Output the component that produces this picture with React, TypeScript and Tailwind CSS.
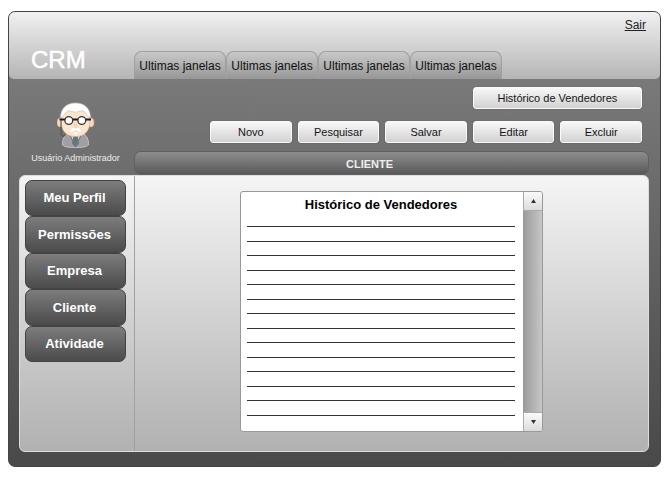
const tabs = ["Ultimas janelas", "Ultimas janelas", "Ultimas janelas", "Ultimas janelas"];
const actions = ["Novo", "Pesquisar", "Salvar", "Editar", "Excluir"];
const menu = ["Meu Perfil", "Permissões", "Empresa", "Cliente", "Atividade"];
const lines = Array.from({ length: 14 }, (_, i) => i);

const actionClass =
  "h-[22px] rounded-[3px] border border-[#fafafa] bg-linear-to-b from-[#f8f8f8] to-[#d2d2d2] text-[11px] leading-4 text-[#151515] shadow-[0_0_1px_#444]";

function Avatar() {
  return (
    <svg width="38" height="46" viewBox="0 0 38 46" role="img" aria-label="Usuário Administrador">
      <path d="M5.500 43C5 36 9 31 15 30h7c6 1 10 6 9.500 13-2 2-7 2.500-13 2.500S7 45 5.500 43z" fill="#a0a0a3" stroke="#c2c2c5" strokeWidth="1" />
      <path d="M13 31l5.500 13L24 31l-5.500 3z" fill="#d5d9de" />
      <path d="M16.500 33.500h4l1.500 8-3.500 4-3.500-4z" fill="#617684" />
      <path d="M12 32l6.500 12M25 32l-6.500 12" stroke="#77777c" fill="none" />
      <ellipse cx="3" cy="20.500" rx="3" ry="4.500" fill="#f8d9ba" stroke="#c99a74" strokeWidth=".6" />
      <ellipse cx="34" cy="20.500" rx="3" ry="4.500" fill="#f8d9ba" stroke="#c99a74" strokeWidth=".6" />
      <path d="M4.500 13C6 6 12 4 18.500 4S31 6 32.500 13v10c-1 7-6 11.500-14 11.500S5.500 30 4.500 23z" fill="#fde5cb" stroke="#dcb28f" strokeWidth=".6" />
      <path d="M3.500 16C3.500 6 10 1 18.500 1s15 5 15 15l-3-2.500C28.500 12 28 9.500 26 9c-3-.7-5 1.300-7.500 1.300S14 8.300 11 9c-2 .5-2.500 3-4.500 4.500z" fill="#fff" stroke="#c9c4c0" strokeWidth=".7" />
      <path d="M2.500 17.500h6M15 17.500h6M28 17.500h6" stroke="#1d1d1d" strokeWidth="2" />
      <circle cx="11.800" cy="18.500" r="3.900" fill="#fff" stroke="#333" strokeWidth="1.300" />
      <circle cx="24.800" cy="18.500" r="3.900" fill="#fff" stroke="#333" strokeWidth="1.300" />
      <path d="M4 18v13c0 4 4 4 5 1" fill="none" stroke="#4b4b4b" />
      <path d="M16.500 21l2-1 2 1v5h-4z" fill="#f8d6b5" />
      <path d="M18.500 26.500c-2.500-2.500-5-1-6.500 4 2.500.3 4.500-.7 6.500-2 2 1.300 4 2.300 6.500 2-1.500-5-4-6.500-6.500-4z" fill="#fff" stroke="#d8cfc6" strokeWidth=".5" />
      <path d="M16.500 30.500h4l-2 3z" fill="#fff" />
    </svg>
  );
}

function ScrollButton({ label, down }: { label: string; down?: boolean }) {
  return (
    <button
      type="button"
      aria-label={label}
      className="flex h-[18px] w-full items-center justify-center bg-linear-to-b from-[#fafafa] to-[#dcdcdc] shadow-[0_0_0_1px_#aaa]"
    >
      <svg width="5" height="4" viewBox="0 0 5 4" aria-hidden="true">
        <path d={down ? "M0 0h5L2.500 4z" : "M0 4h5L2.500 0z"} fill="#333" />
      </svg>
    </button>
  );
}

export default function App() {
  return (
    <div className="bg-white pt-[11px] pr-[11px] pb-2.5 pl-2 font-['Liberation_Sans',Arial,sans-serif]">
      <div className="overflow-hidden rounded-[7px] border border-[#444] bg-linear-to-b from-[#828282] to-[#494949]">
        <header className="flex h-[67px] items-stretch rounded-b-[5px] bg-linear-to-b from-[#f1f1f1] to-[#b5b5b5]">
          <h1 className="w-[125px] shrink-0 pt-[34px] pl-[22px] text-[24px] leading-7 text-white [-webkit-text-stroke:0.5px_white]">CRM</h1>
          <nav className="flex items-end" aria-label="Janelas">
            {tabs.map((tab, i) => (
              <button
                key={i}
                type="button"
                className="h-7 w-[92px] rounded-t-[8px] border border-b-0 border-[#a0a0a0] bg-linear-to-b from-[#c9c9c9] to-[#979797] text-[12px] whitespace-nowrap text-[#111]"
              >
                {tab}
              </button>
            ))}
          </nav>
          <a href="#sair" className="mt-[5px] mr-[14px] ml-auto self-start text-[12px] leading-4 text-[#222] underline">
            Sair
          </a>
        </header>

        <div className="flex h-24">
          <div className="flex w-[125px] shrink-0 flex-col items-center pt-[23px] pl-2">
            <Avatar />
            <p className="mt-0.5 text-[9px] leading-4 whitespace-nowrap text-[#eee]">Usuário Administrador</p>
          </div>
          <div className="flex grow flex-col justify-between pr-[11px]">
            <div className="mt-2 mr-[7px] grid w-[432px] grid-cols-5 gap-x-1.5 gap-y-3 self-end">
              <button type="button" className={`col-span-2 col-start-4 ${actionClass}`}>
                Histórico de Vendedores
              </button>
              {actions.map((action) => (
                <button key={action} type="button" className={actionClass}>
                  {action}
                </button>
              ))}
            </div>
            <h2 className="h-6 rounded-[7px] border border-[#606060] bg-linear-to-b from-[#8e8e8e] to-[#595959] pr-11 text-center text-[11px] leading-6 font-bold text-[#eee]">
              CLIENTE
            </h2>
          </div>
        </div>

        <main className="mr-[11px] mb-[14px] ml-2.5 flex h-[277px] overflow-hidden rounded-[6px] border border-[#ddd] bg-linear-to-b from-[#f5f5f5] to-[#b1b1b1]">
          <nav className="w-[115px] shrink-0 border-r border-[#a0a0a0] pt-1 pr-2 pl-[5px]" aria-label="Menu">
            <div className="flex h-[182px] flex-col">
              {menu.map((item) => (
                <button
                  key={item}
                  type="button"
                  className="grow basis-0 rounded-[7px] border border-[#434343] bg-linear-to-b from-[#7d7d7d] to-[#4b4b4b] pr-0.5 text-[13px] font-bold text-white"
                >
                  {item}
                </button>
              ))}
            </div>
          </nav>
          <div className="flex grow items-start justify-center pt-[15px]">
            <section className="flex h-[241px] w-[303px] overflow-hidden rounded-[3px] border border-[#999] bg-white">
              <div className="grow pr-2 pl-1.5">
                <h3 className="mt-1 mb-3 text-center text-[13px] leading-[18px] font-bold text-black">Histórico de Vendedores</h3>
                <div className="flex h-[190px] flex-col justify-between">
                  {lines.map((line) => (
                    <hr key={line} className="border-t border-[#333]" />
                  ))}
                </div>
              </div>
              <div className="flex w-[19px] shrink-0 flex-col justify-between border-l border-[#999] bg-linear-to-r from-[#9d9d9d] to-[#c6c6c6]">
                <ScrollButton label="Rolar para cima" />
                <ScrollButton label="Rolar para baixo" down />
              </div>
            </section>
          </div>
        </main>
      </div>
    </div>
  );
}
